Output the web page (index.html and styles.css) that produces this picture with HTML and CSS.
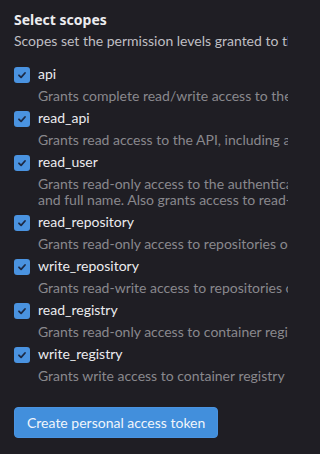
FILE: index.html
```html
<!DOCTYPE html>
<html>
<head>
<meta charset="utf-8">
<link rel="stylesheet" href="styles.css">
</head>
<body>
<div class="frame">
<div class="page">
  <h4 class="title">Select scopes</h4>
  <p class="intro">Scopes set the permission levels granted to the token.</p>
  <ul class="scopes">
    <li class="scope">
      <span class="box"><svg viewBox="0 0 16 16" width="16" height="16"><path d="M5 8.3 L7.1 10.3 L11 6" fill="none" stroke="#1d2a44" stroke-width="1.8" stroke-linecap="round" stroke-linejoin="round"/></svg></span>
      <div class="text"><div class="name">api</div><div class="desc">Grants complete read/write access to the API, including all groups and projects, the container registry, and the package registry.</div></div>
    </li>
    <li class="scope">
      <span class="box"><svg viewBox="0 0 16 16" width="16" height="16"><path d="M5 8.3 L7.1 10.3 L11 6" fill="none" stroke="#1d2a44" stroke-width="1.8" stroke-linecap="round" stroke-linejoin="round"/></svg></span>
      <div class="text"><div class="name">read_api</div><div class="desc">Grants read access to the API, including all groups and projects, the container registry, and the package registry.</div></div>
    </li>
    <li class="scope">
      <span class="box"><svg viewBox="0 0 16 16" width="16" height="16"><path d="M5 8.3 L7.1 10.3 L11 6" fill="none" stroke="#1d2a44" stroke-width="1.8" stroke-linecap="round" stroke-linejoin="round"/></svg></span>
      <div class="text"><div class="name">read_user</div><div class="desc">Grants read-only access to the authenticated user's profile through the /user API endpoint, which includes username, public email,<br>and full name. Also grants access to read-only API endpoints under /users.</div></div>
    </li>
    <li class="scope">
      <span class="box"><svg viewBox="0 0 16 16" width="16" height="16"><path d="M5 8.3 L7.1 10.3 L11 6" fill="none" stroke="#1d2a44" stroke-width="1.8" stroke-linecap="round" stroke-linejoin="round"/></svg></span>
      <div class="text"><div class="name">read_repository</div><div class="desc">Grants read-only access to repositories on private projects using Git-over-HTTP or the Repository Files API.</div></div>
    </li>
    <li class="scope">
      <span class="box"><svg viewBox="0 0 16 16" width="16" height="16"><path d="M5 8.3 L7.1 10.3 L11 6" fill="none" stroke="#1d2a44" stroke-width="1.8" stroke-linecap="round" stroke-linejoin="round"/></svg></span>
      <div class="text"><div class="name">write_repository</div><div class="desc">Grants read-write access to repositories on private projects using Git-over-HTTP (not using the API).</div></div>
    </li>
    <li class="scope">
      <span class="box"><svg viewBox="0 0 16 16" width="16" height="16"><path d="M5 8.3 L7.1 10.3 L11 6" fill="none" stroke="#1d2a44" stroke-width="1.8" stroke-linecap="round" stroke-linejoin="round"/></svg></span>
      <div class="text"><div class="name">read_registry</div><div class="desc">Grants read-only access to container registry images on private projects.</div></div>
    </li>
    <li class="scope">
      <span class="box"><svg viewBox="0 0 16 16" width="16" height="16"><path d="M5 8.3 L7.1 10.3 L11 6" fill="none" stroke="#1d2a44" stroke-width="1.8" stroke-linecap="round" stroke-linejoin="round"/></svg></span>
      <div class="text"><div class="name">write_registry</div><div class="desc">Grants write access to container registry images on private projects.</div></div>
    </li>
  </ul>
  <button class="btn">Create personal access token</button>
</div>
</div>
</body>
</html>
```

FILE: styles.css
```css
html, body {
  margin: 0;
  padding: 0;
  background: #1f1e24;
  overflow: hidden;
}
.frame {
  width: 288px;
  height: 454px;
  overflow: hidden;
}
.page {
  width: 1200px;
  padding: 10px 0 0 14px;
  font-family: Lato, "Noto Sans", sans-serif;
  font-size: 14px;
  color: #ececef;
}
.title {
  margin: 0;
  font-family: "Noto Sans", Lato, sans-serif;
  font-size: 14px;
  line-height: 20px;
  font-weight: 700;
  color: #ececef;
}
.intro {
  margin: 1px 0 0;
  line-height: 20px;
  color: #bfbfc3;
}
.scopes {
  list-style: none;
  margin: 13px 0 0;
  padding: 0;
  display: flex;
  flex-direction: column;
  gap: 4px;
}
.scope {
  display: flex;
  gap: 8px;
  align-items: flex-start;
}
.box {
  width: 16px;
  height: 16px;
  margin-top: 3px;
  border-radius: 3px;
  background: #4a93e0;
  display: flex;
  flex: none;
}
.name {
  line-height: 20px;
  color: #ececef;
}
.desc {
  margin-top: 4px;
  line-height: 16px;
  color: #89888d;
  white-space: nowrap;
}
.btn {
  margin-top: 23px;
  height: 31px;
  padding: 0 12px;
  border: 1px solid #4a93e0;
  border-radius: 4px;
  background: #428fdc;
  color: #f0f5fb;
  font-family: Lato, "Noto Sans", sans-serif;
  font-size: 14px;
}
```
